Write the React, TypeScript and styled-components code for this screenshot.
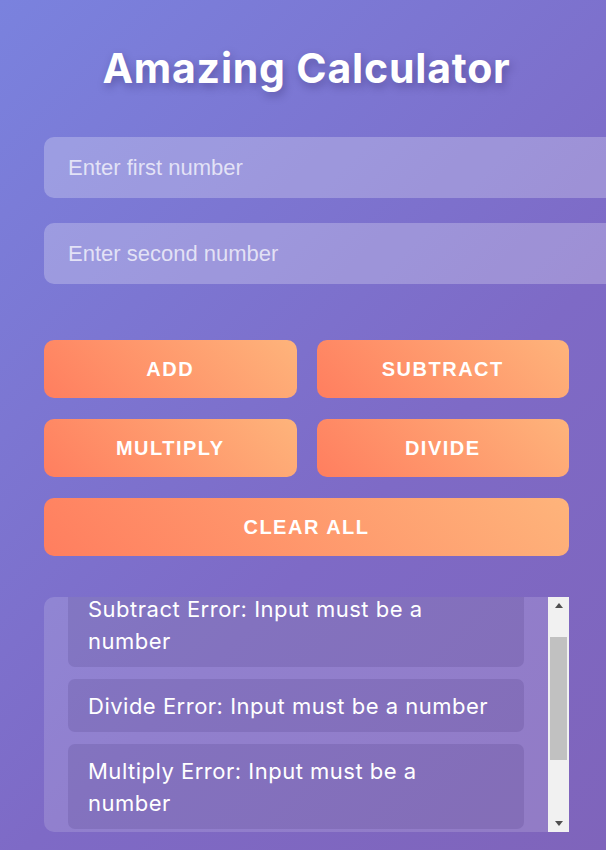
import React, { useEffect, useRef } from 'react';
import styled, { createGlobalStyle } from 'styled-components';

const GlobalStyle = createGlobalStyle`
  html, body {
    margin: 0;
    padding: 0;
    height: 100%;
    overflow: hidden;
  }
  body {
    background: linear-gradient(135deg, #7a82de 0%, #7e6ac6 60%, #7f64bb 100%);
    font-family: "Liberation Sans", Arial, sans-serif;
  }
`;

const Page = styled.div`
  width: 525px;
  padding: 44px 0 0 44px;
`;

const Title = styled.h1`
  margin: 0 0 45px;
  text-align: center;
  font-family: "Inter", "Open Sans", sans-serif;
  font-weight: 700;
  font-size: 41px;
  line-height: 48px;
  letter-spacing: 0.8px;
  color: #fff;
  text-shadow: 2px 4px 8px rgba(40, 30, 90, 0.35);
`;

const Inputs = styled.div`
  display: flex;
  flex-direction: column;
  gap: 25px;
  margin-bottom: 56px;
`;

const NumberInput = styled.input`
  width: 100%;
  box-sizing: content-box;
  padding: 18px 24px;
  border: none;
  border-radius: 10px;
  background: rgba(255, 255, 255, 0.25);
  font-family: "Liberation Sans", Arial, sans-serif;
  font-size: 22px;
  line-height: 25px;
  height: 25px;
  color: #fff;
  outline: none;
  &::placeholder {
    color: rgba(255, 255, 255, 0.72);
  }
`;

const ButtonGrid = styled.div`
  display: grid;
  grid-template-columns: 1fr 1fr;
  column-gap: 20px;
  row-gap: 21px;
  margin-bottom: 41px;
`;

const OpButton = styled.button<{ $wide?: boolean }>`
  grid-column: ${(p) => (p.$wide ? '1 / span 2' : 'auto')};
  height: 58px;
  border: none;
  border-radius: 10px;
  background: linear-gradient(45deg, #ff7e5f 0%, #feb47b 100%);
  color: #fff;
  font-family: "Liberation Sans", Arial, sans-serif;
  font-weight: 700;
  font-size: 20px;
  letter-spacing: 1.5px;
  text-transform: uppercase;
  cursor: pointer;
`;

const HistoryPanel = styled.div`
  display: flex;
  height: 235px;
  border-radius: 10px 0 0 10px;
  background: rgba(255, 255, 255, 0.15);
`;

const HistoryList = styled.div`
  flex: 1;
  overflow: hidden;
  box-sizing: border-box;
  padding: 35px 24px 24px;
  display: flex;
  flex-direction: column;
  gap: 12px;
`;

const Entry = styled.div`
  flex: none;
  padding: 11px 20px 10px;
  border-radius: 7px;
  background: rgba(30, 20, 80, 0.12);
  color: #fff;
  font-family: "Inter", "Open Sans", sans-serif;
  font-size: 22px;
  letter-spacing: 0.5px;
  line-height: 32px;
`;

const ScrollTrack = styled.div`
  flex: none;
  width: 21px;
  display: flex;
  flex-direction: column;
  background: #f1f1f1;
`;

const ScrollArrow = styled.div<{ $down?: boolean }>`
  flex: none;
  height: 17px;
  display: flex;
  align-items: center;
  justify-content: center;
  &::after {
    content: '';
    width: 0;
    height: 0;
    border-left: 4.5px solid transparent;
    border-right: 4.5px solid transparent;
    ${(p) =>
      p.$down ? 'border-top: 5px solid #505050;' : 'border-bottom: 5px solid #505050;'}
  }
`;

const ScrollRest = styled.div`
  flex: 1;
`;

const ScrollThumb = styled.div<{ $offset: number; $size: number }>`
  flex: none;
  margin: ${(p) => p.$offset}px 2px 0;
  height: ${(p) => p.$size}px;
  background: #c1c1c1;
`;

const entries = [
  'Subtract Error: Input must be a number',
  'Divide Error: Input must be a number',
  'Multiply Error: Input must be a number',
];

export default function App() {
  const listRef = useRef<HTMLDivElement>(null);

  useEffect(() => {
    if (listRef.current) listRef.current.scrollTop = 50;
  }, []);

  return (
    <>
      <GlobalStyle />
      <Page>
        <Title>Amazing Calculator</Title>
        <Inputs>
          <NumberInput type="text" placeholder="Enter first number" />
          <NumberInput type="text" placeholder="Enter second number" />
        </Inputs>
        <ButtonGrid>
          <OpButton>Add</OpButton>
          <OpButton>Subtract</OpButton>
          <OpButton>Multiply</OpButton>
          <OpButton>Divide</OpButton>
          <OpButton $wide>Clear All</OpButton>
        </ButtonGrid>
        <HistoryPanel>
          <HistoryList ref={listRef}>
            {entries.map((e) => (
              <Entry key={e}>{e}</Entry>
            ))}
          </HistoryList>
          <ScrollTrack>
            <ScrollArrow />
            <ScrollThumb $offset={23} $size={123} />
            <ScrollRest />
            <ScrollArrow $down />
          </ScrollTrack>
        </HistoryPanel>
      </Page>
    </>
  );
}
